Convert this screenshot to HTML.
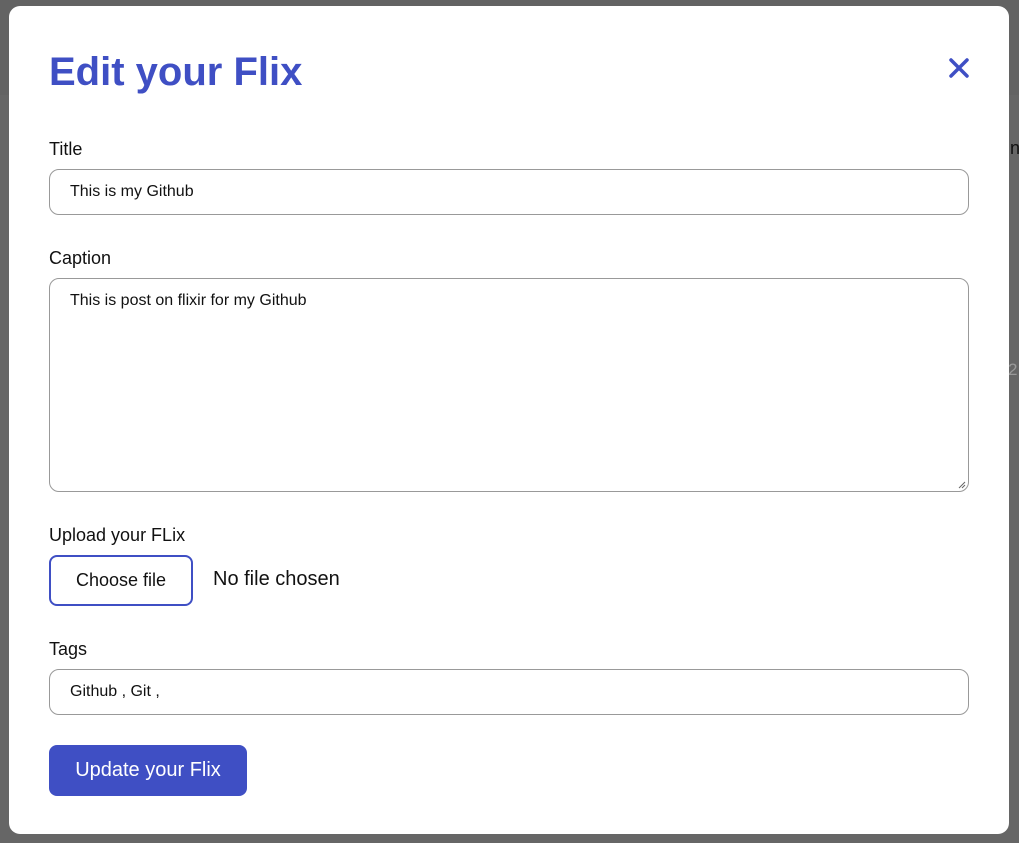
<!DOCTYPE html>
<html><head><style>
body{margin:0;width:1019px;height:843px;background:#666;position:relative;overflow:hidden;font-family:"Liberation Sans",sans-serif}
.top{position:absolute;left:0;top:0;width:1019px;height:95px;background:#636363}
.m{position:absolute;left:9px;top:6px;width:1000px;height:828px;background:#fff;border-radius:11px}
.a{position:absolute}
h1{position:absolute;left:49px;top:50px;margin:0;font-size:40px;font-weight:bold;color:#3f4fc4;letter-spacing:0}
.l{position:absolute;left:49px;font-size:18px;color:#111}
.in{position:absolute;left:49px;width:918px;border:1px solid #999;border-radius:10px;background:#fff;font-size:16px;color:#111;box-sizing:content-box}
.in span{position:absolute;left:20px}
</style></head><body>
<div class="top"></div>
<div class="a" style="left:1010px;top:138px;font-size:18px;color:#111">ne</div>
<div class="a" style="left:1008px;top:360px;font-size:17px;color:#999">2</div>
<div class="m"></div>
<h1>Edit your Flix</h1>
<svg class="a" style="left:948px;top:57px" width="22" height="22" viewBox="0 0 22 22"><path d="M3 3L19 19M19 3L3 19" stroke="#3f4fc4" stroke-width="3.5" stroke-linecap="round"/></svg>
<div class="l" style="top:139px">Title</div>
<div class="in" style="top:169px;height:44px"><span style="top:13px">This is my Github</span></div>
<div class="l" style="top:248px">Caption</div>
<div class="in" style="top:278px;height:212px"><span style="top:13px">This is post on flixir for my Github</span>
<svg class="a" style="right:2px;bottom:2px" width="10" height="10"><path d="M9 3L3 9M9 6L6 9" stroke="#666" stroke-width="1"/></svg></div>
<div class="l" style="top:525px">Upload your FLix</div>
<div class="a" style="left:49px;top:555px;width:140px;height:47px;border:2px solid #3f4fc4;border-radius:8px;font-size:18px;color:#111;text-align:center;line-height:47px">Choose file</div>
<div class="a" style="left:213px;top:568px;font-size:20px;color:#111">No file chosen</div>
<div class="l" style="top:639px">Tags</div>
<div class="in" style="top:669px;height:44px"><span style="top:13px">Github , Git ,</span></div>
<div class="a" style="left:49px;top:745px;width:198px;height:51px;background:#3f4fc4;border-radius:8px;color:#fff;font-size:20px;text-align:center;line-height:51px">Update your Flix</div>
</body></html>
